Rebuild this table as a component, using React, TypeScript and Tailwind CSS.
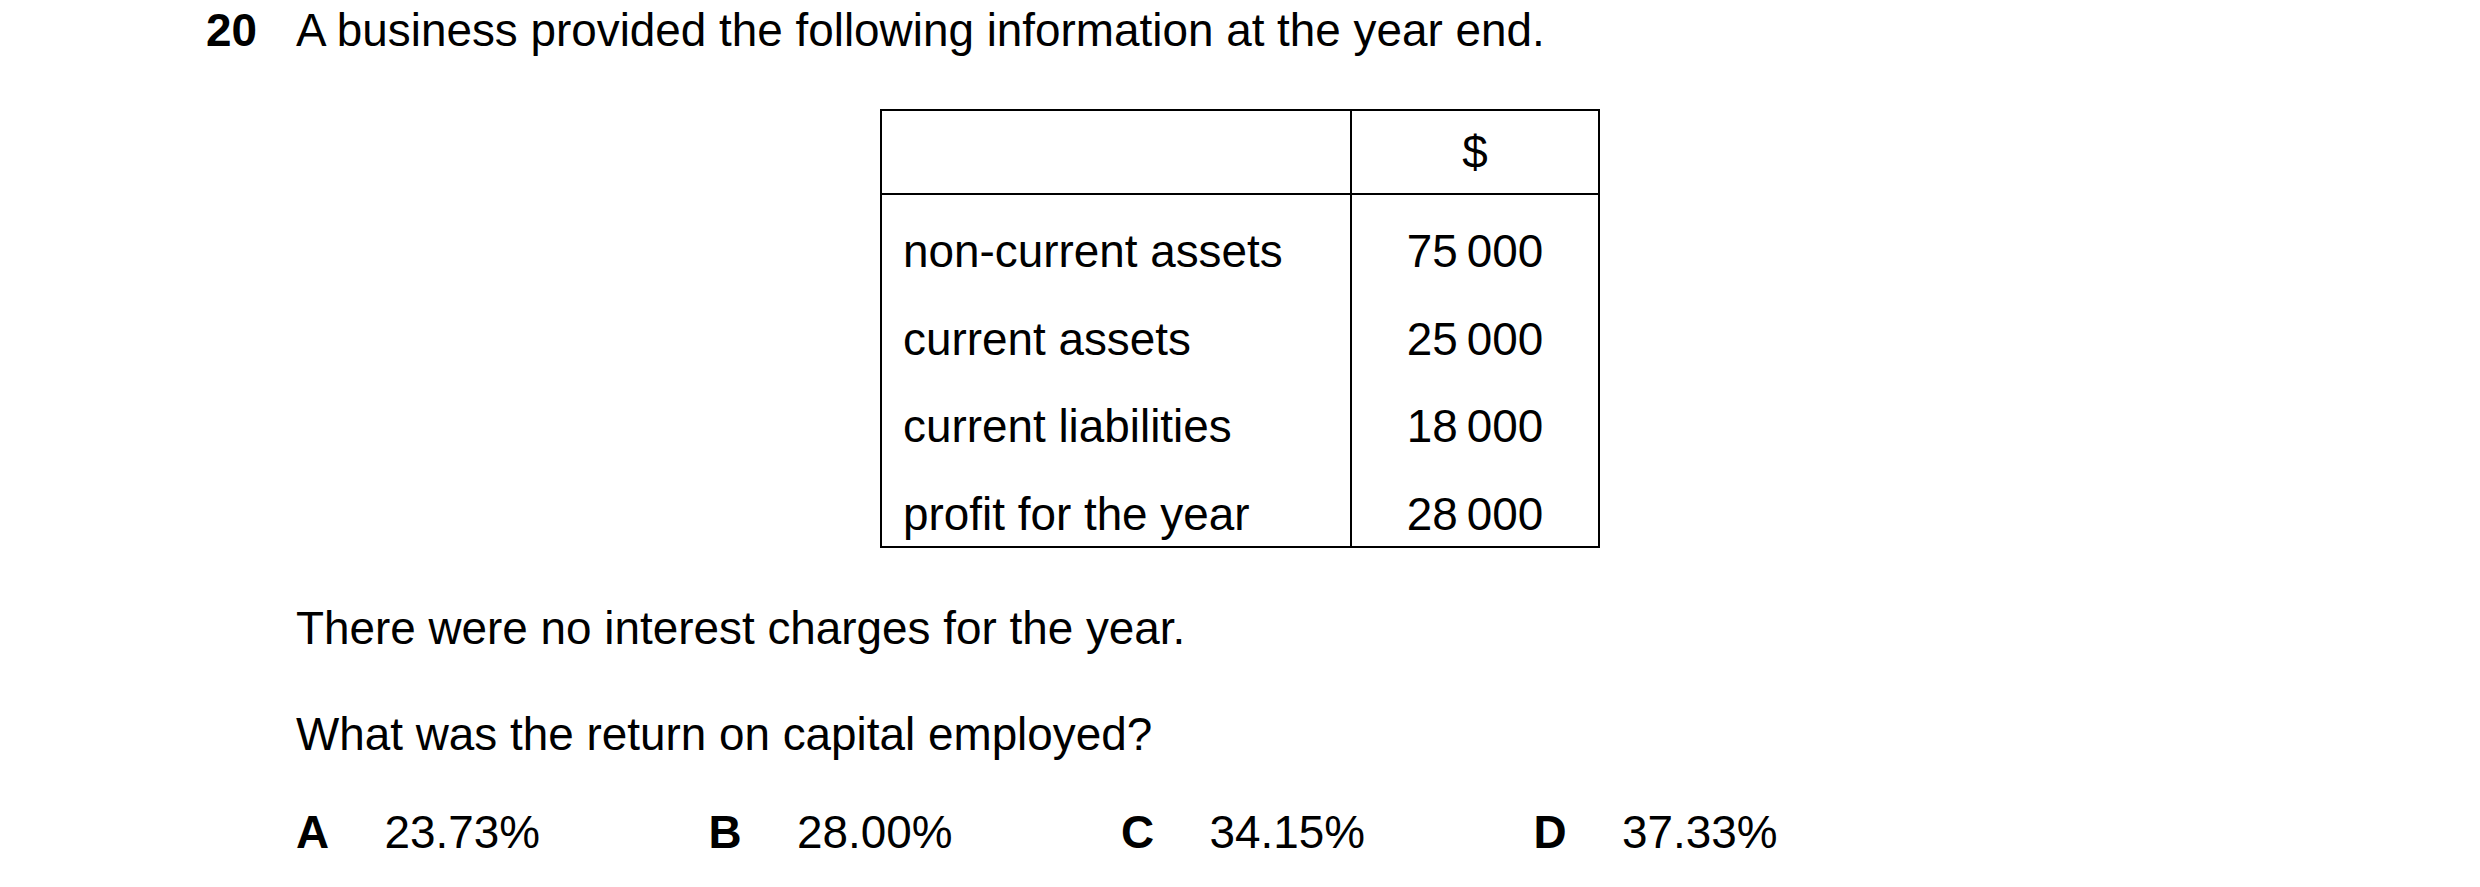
const rows = [
  { label: 'non-current assets', value: '75\u2009000' },
  { label: 'current assets', value: '25\u2009000' },
  { label: 'current liabilities', value: '18\u2009000' },
  { label: 'profit for the year', value: '28\u2009000' },
];

const options = [
  { letter: 'A', value: '23.73%' },
  { letter: 'B', value: '28.00%' },
  { letter: 'C', value: '34.15%' },
  { letter: 'D', value: '37.33%' },
];

export default function App() {
  return (
    <div className="min-h-screen bg-white text-black font-['Liberation_Sans',Arial,sans-serif] text-[45.85px] leading-[52px] pt-[4px]">
      {/* Question stem */}
      <div className="flex pl-[206px]">
        <span className="w-[90px] font-bold">20</span>
        <p>A business provided the following information at the year end.</p>
      </div>

      {/* Data table */}
      <div className="mt-[53px] flex justify-center">
        <div className="w-[720px] border-2 border-black">
          <div className="flex h-[84px] border-b-2 border-black">
            <div className="w-[470px] border-r-2 border-black" />
            <div className="flex-1 flex items-center justify-center">$</div>
          </div>
          <div className="flex">
            <div className="w-[470px] border-r-2 border-black pl-[21px] pt-[24px] flex flex-col gap-[23.5px]">
              {rows.map((row) => (
                <span key={row.label} className="leading-[64px]">
                  {row.label}
                </span>
              ))}
            </div>
            <div className="flex-1 pt-[24px] flex flex-col items-center gap-[23.5px]">
              {rows.map((row) => (
                <span key={row.label} className="leading-[64px]">
                  {row.value}
                </span>
              ))}
            </div>
          </div>
        </div>
      </div>

      <div className="pl-[296px]">
        <p className="mt-[54px]">There were no interest charges for the year.</p>
        <p className="mt-[54px]">What was the return on capital employed?</p>

        {/* Answer options */}
        <div className="mt-[46px] flex">
          {options.map((opt) => (
            <div key={opt.letter} className="w-[412.5px] flex">
              <span className="w-[88.5px] font-bold">{opt.letter}</span>
              <span>{opt.value}</span>
            </div>
          ))}
        </div>
      </div>
    </div>
  );
}
